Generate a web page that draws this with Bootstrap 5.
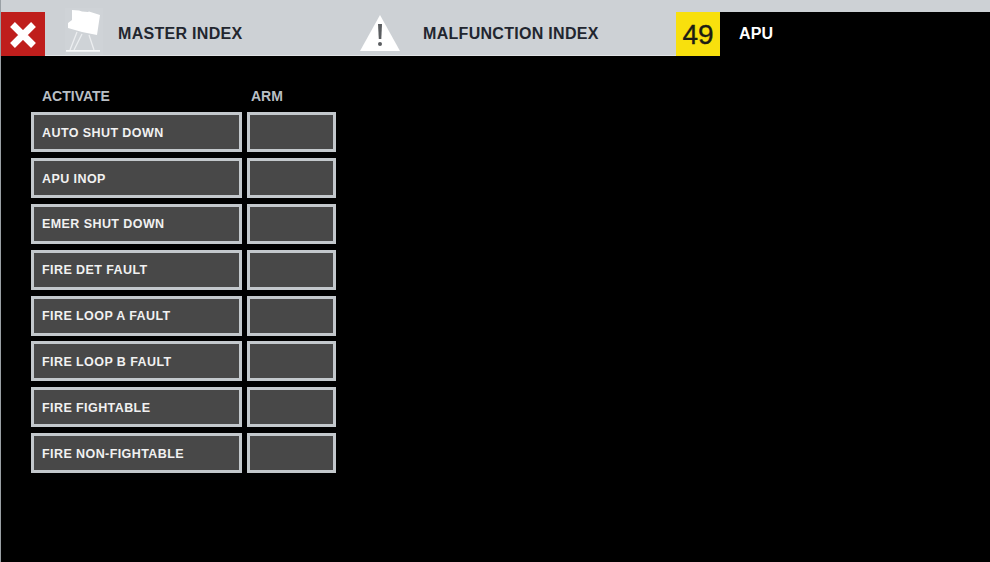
<!DOCTYPE html>
<html lang="en">
<head>
<meta charset="utf-8">
<title>APU</title>
<link href="https://cdn.jsdelivr.net/npm/bootstrap@5.3.0/dist/css/bootstrap.min.css" rel="stylesheet">
<style>
html,body{height:100%;margin:0;overflow:hidden}
body{background:#000;font-family:"Liberation Sans",Arial,sans-serif;border-left:1px solid #9aa0a5}
.topbar{height:56px;background:linear-gradient(#cdd1d5 55px,#e0e3e5 55px);padding-top:12px;margin-left:-1px}
.xbox{width:44px;height:44px;background:#bf1e1c;margin-left:1px}
.sim-ico{width:40px;height:44px;margin-left:20px}
.sim-ico svg,.warn-ico svg{overflow:visible;display:block}
.hdr-title{font-weight:700;font-size:16px;letter-spacing:.3px;color:#22262f;padding-bottom:1px}
.t1{margin-left:13px;width:242px}
.warn-ico{width:42px;height:44px}
.t2{margin-left:21px;width:253px}
.numbox{width:44px;height:44px;background:#f8e00d;color:#1c1c14;font-size:28px;line-height:46px;text-align:center;-webkit-text-stroke:.35px #1c1c14}
.apu-zone{height:44px;background:#000;color:#fff;font-weight:700;font-size:16px;padding:0 0 1px 19px;letter-spacing:.1px}
.panel{padding:30px 0 0 30px;width:340px}
.colhead{color:#b9bfc4;font-weight:700;font-size:14px;height:26px;line-height:20px}
.ch1{width:216px;padding-left:11px}
.ch2{padding-left:4px}
.rowset{display:flex;flex-direction:column;gap:5.9px}
.fbtn{height:40px;background:#484848;border:3px solid #c3c8cc;border-radius:0;color:#f1f1f1;font-weight:700;font-size:12.5px;letter-spacing:.42px;padding:2px 0 0 8px;text-align:left;display:flex;align-items:center}
.fbtn:hover{background:#484848;border-color:#c3c8cc;color:#f1f1f1}
.fa{width:211px}
.fb{width:89px;margin-left:5px}
</style>
</head>
<body>
<div class="topbar d-flex align-items-stretch">
  <div class="xbox flex-shrink-0">
    <svg width="44" height="44" viewBox="0 0 44 44" class="d-block"><path d="M11.5 12.5 32.5 33.5M32.5 12.5 11.5 33.5" stroke="#fff" stroke-width="6.8" fill="none"/></svg>
  </div>
  <div class="sim-ico flex-shrink-0">
    <svg width="40" height="44" viewBox="0 0 40 44">
      <rect x="0" y="-4" width="38" height="47" fill="#cfd3d7"/>
      <path d="M7 -2 14 -1.500 17 -.5 23 0 24 -.5 35 3 32 23 17 20 3 16 3 11 7 8Z" fill="#fff"/>
      <path d="M12 20 5 38M17 22 9 38M24 23 29 38" stroke="#eceef0" stroke-width="1.300" fill="none"/>
      <path d="M1 38.800H35" stroke="#f7f8f8" stroke-width="1.800"/>
    </svg>
  </div>
  <div class="hdr-title t1 flex-shrink-0 d-flex align-items-center">MASTER INDEX</div>
  <div class="warn-ico flex-shrink-0">
    <svg width="42" height="44" viewBox="0 0 42 44">
      <path d="M20 3 40 39H0Z" fill="#fff"/>
      <path d="M18 12H22L21.300 27H18.800Z" fill="#5a5d60"/>
      <circle cx="20" cy="32" r="2" fill="#5a5d60"/>
    </svg>
  </div>
  <div class="hdr-title t2 flex-shrink-0 d-flex align-items-center">MALFUNCTION INDEX</div>
  <div class="numbox flex-shrink-0">49</div>
  <div class="apu-zone flex-grow-1 d-flex align-items-center">APU</div>
</div>
<div class="panel">
  <div class="d-flex colhead"><div class="ch1">ACTIVATE</div><div class="ch2">ARM</div></div>
  <div class="rowset">
    <div class="d-flex"><button type="button" class="btn fbtn fa">AUTO SHUT DOWN</button><button type="button" class="btn fbtn fb" aria-label="Arm"></button></div>
    <div class="d-flex"><button type="button" class="btn fbtn fa">APU INOP</button><button type="button" class="btn fbtn fb" aria-label="Arm"></button></div>
    <div class="d-flex"><button type="button" class="btn fbtn fa">EMER SHUT DOWN</button><button type="button" class="btn fbtn fb" aria-label="Arm"></button></div>
    <div class="d-flex"><button type="button" class="btn fbtn fa">FIRE DET FAULT</button><button type="button" class="btn fbtn fb" aria-label="Arm"></button></div>
    <div class="d-flex"><button type="button" class="btn fbtn fa">FIRE LOOP A FAULT</button><button type="button" class="btn fbtn fb" aria-label="Arm"></button></div>
    <div class="d-flex"><button type="button" class="btn fbtn fa">FIRE LOOP B FAULT</button><button type="button" class="btn fbtn fb" aria-label="Arm"></button></div>
    <div class="d-flex"><button type="button" class="btn fbtn fa">FIRE FIGHTABLE</button><button type="button" class="btn fbtn fb" aria-label="Arm"></button></div>
    <div class="d-flex"><button type="button" class="btn fbtn fa">FIRE NON-FIGHTABLE</button><button type="button" class="btn fbtn fb" aria-label="Arm"></button></div>
  </div>
</div>
<script src="https://cdn.jsdelivr.net/npm/bootstrap@5.3.0/dist/js/bootstrap.bundle.min.js"></script>
</body>
</html>
